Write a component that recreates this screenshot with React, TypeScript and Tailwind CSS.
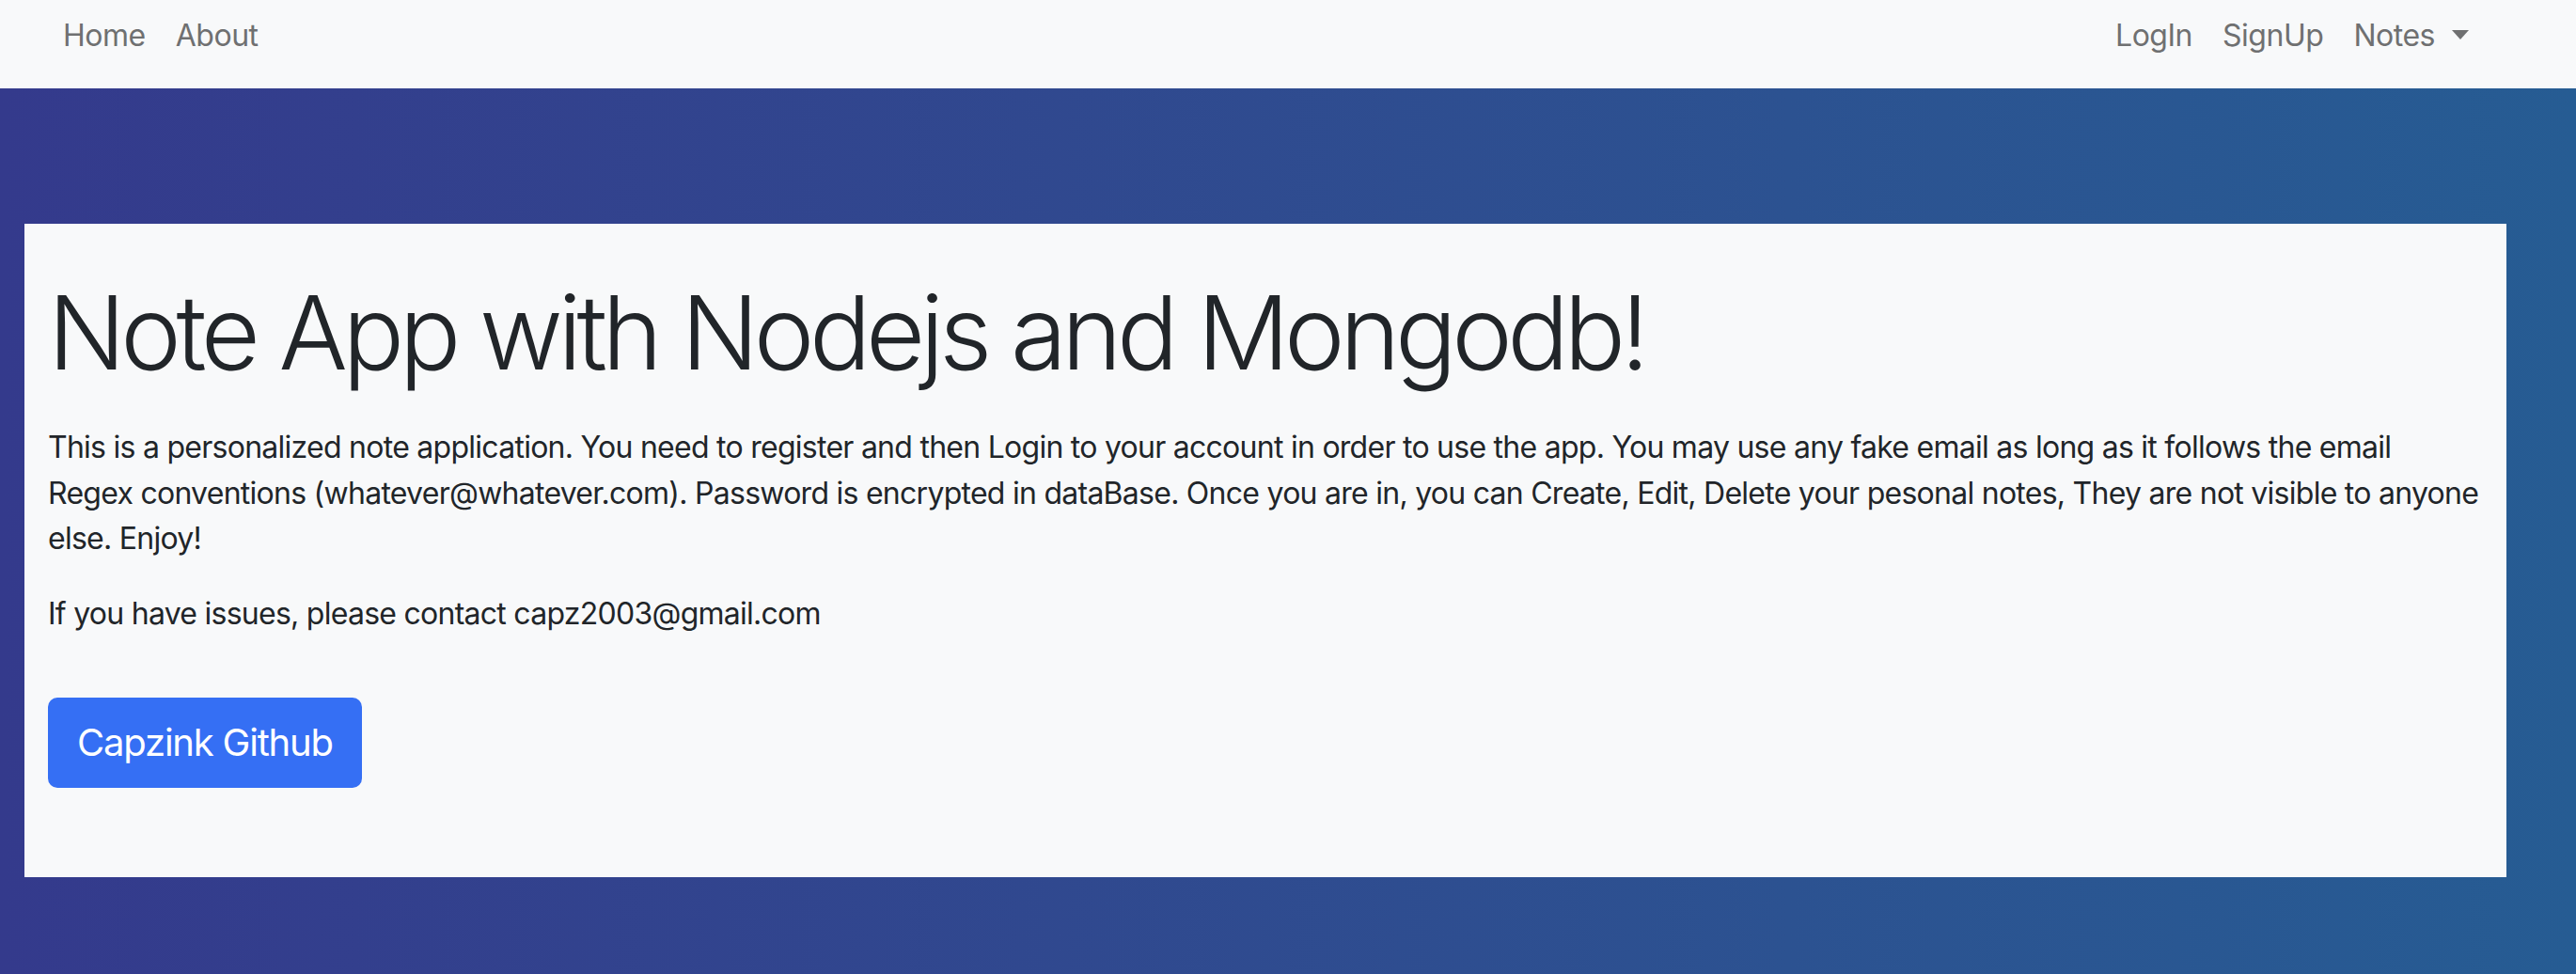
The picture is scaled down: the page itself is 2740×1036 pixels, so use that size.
export default function App() {
  return (
    <div className="min-h-screen flex flex-col font-['Inter',sans-serif]">
      <nav className="h-[94px] bg-[#f8f9fa] flex items-start justify-between pt-[14px] pl-[51px] pr-[98px] text-[32px] leading-[48px] tracking-[-0.015em] text-[#6f7071]">
        <div className="flex">
          <a href="#" className="px-4">Home</a>
          <a href="#" className="px-4">About</a>
        </div>
        <div className="flex">
          <a href="#" className="px-4">LogIn</a>
          <a href="#" className="px-4">SignUp</a>
          <a href="#" className="px-4 flex items-center">
            Notes
            <span className="ml-[18px] mb-[3px] inline-block w-0 h-0 border-t-[10px] border-t-[#6f7071] border-x-[9.5px] border-x-transparent"></span>
          </a>
        </div>
      </nav>

      <main className="flex-1 h-[942px] bg-gradient-to-r from-[#343a8c] to-[#265c93] pt-[144px] pl-[26px]">
        <div className="w-[2640px] bg-[#f8f9fa] pt-[48px] pb-[95px] px-[25px] text-[#212529]">
          <h1 className="text-[109px] leading-[1.23] font-light tracking-[-0.05em]">Note App with Nodejs and Mongodb!</h1>
          <p className="mt-[32px] text-[32px] leading-[48.5px] tracking-[-0.023em]">
            This is a personalized note application. You need to register and then Login to your account in order to use the app. You may use any fake email as long as it follows the email Regex conventions (whatever@whatever.com). Password is encrypted in dataBase. Once you are in, you can Create, Edit, Delete your pesonal notes, They are not visible to anyone else. Enjoy!
          </p>
          <p className="mt-[31px] text-[32px] leading-[48px] tracking-[-0.023em]">If you have issues, please contact capz2003@gmail.com</p>
          <a
            href="#"
            className="inline-block mt-[65px] bg-[#356ff4] text-white rounded-[10px] px-[31px] py-[18px] text-[40px] leading-[60px] tracking-[-0.03em]"
          >
            Capzink Github
          </a>
        </div>
      </main>
    </div>
  )
}
